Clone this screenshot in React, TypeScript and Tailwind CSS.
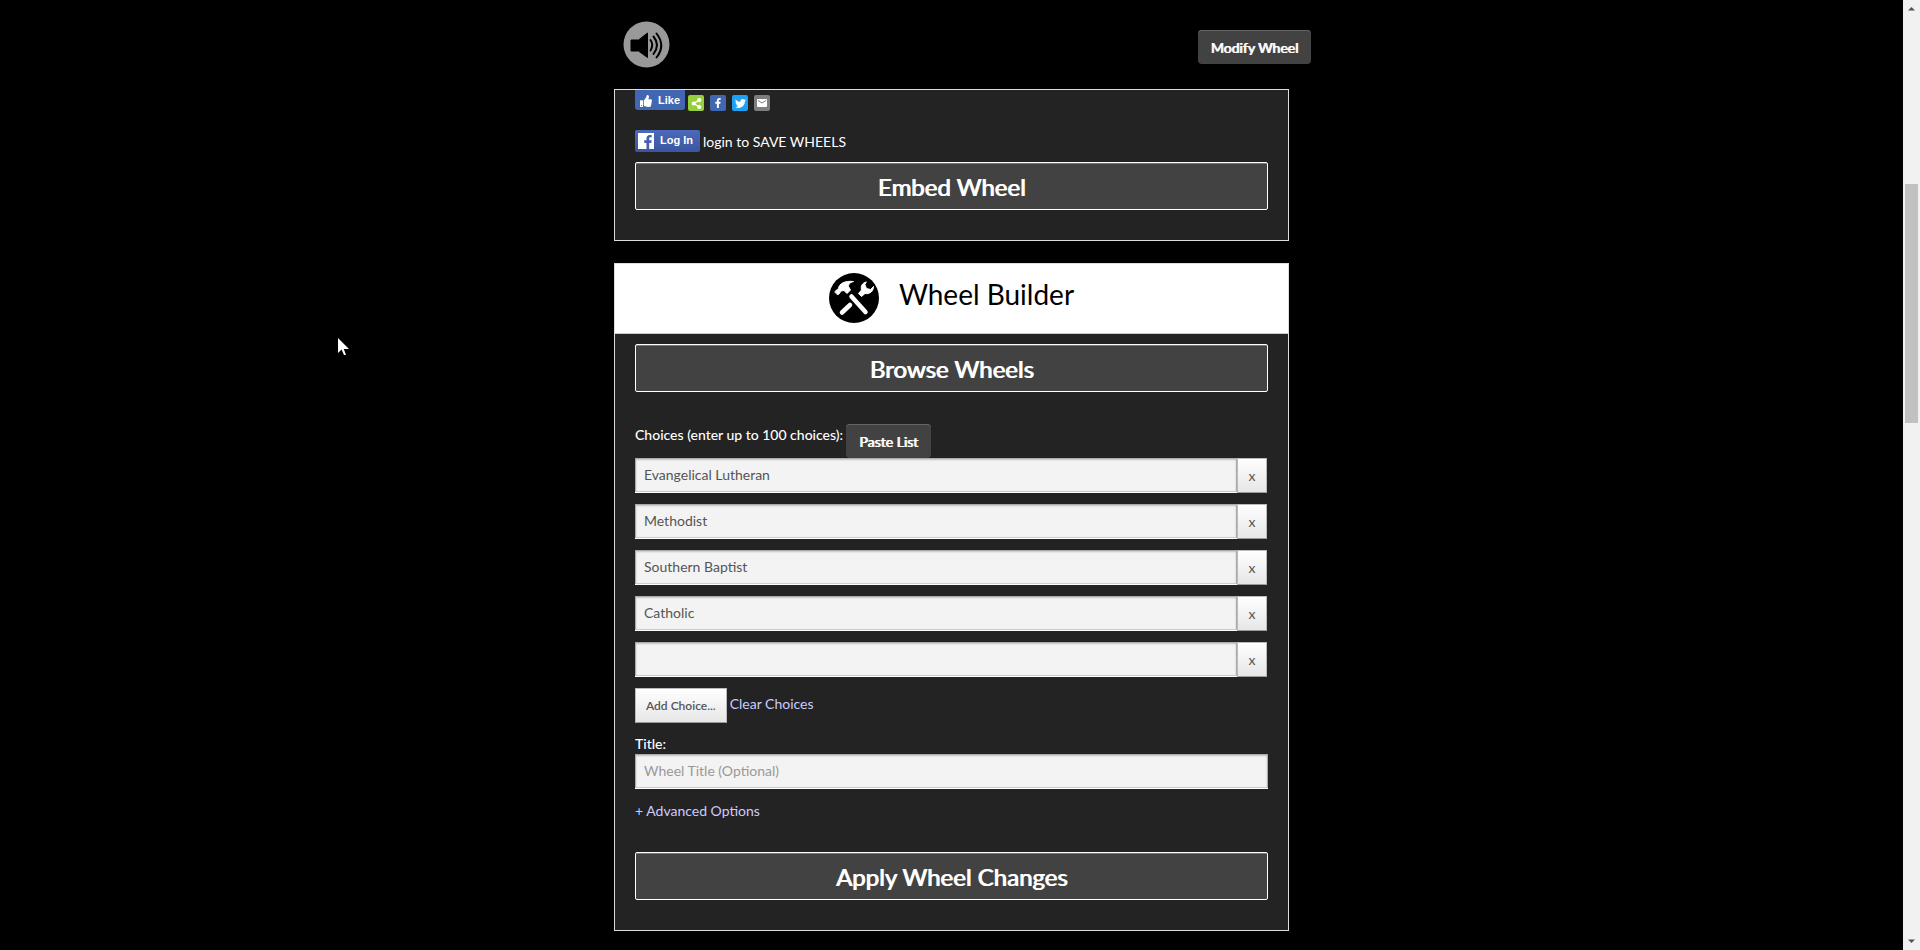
import { useState } from 'react';
import type { ReactNode } from 'react';
import { FaFacebookF, FaShareAlt, FaThumbsUp, FaTwitter } from 'react-icons/fa';
import { MdEmail } from 'react-icons/md';

function SpeakerIcon() {
    return (
        <svg viewBox="0 0 47 47" className="w-[47px] h-[47px]" aria-hidden="true">
            <circle cx="23.5" cy="23.5" r="23" fill="#999" />
            <path d="M8 19h7.500L24.500 12v24.500L15.500 30H8z" fill="#000" stroke="#000" strokeLinejoin="round" />
            <path d="M27.500 19q3.500 5 0 10.500M30.500 15.500q7 8.500 0 17.500M33.500 12.500q9.500 12 0 24" fill="none" stroke="#000" strokeWidth="2" strokeLinecap="round" />
        </svg>
    );
}

function ToolsIcon() {
    return (
        <svg viewBox="0 0 50 50" className="w-[50px] h-[50px]" aria-hidden="true">
            <circle cx="25" cy="25" r="25" fill="#000" />
            <g fill="#fff" stroke="#fff" strokeLinejoin="round" strokeLinecap="round">
                <path d="M22.500 23.500L36.500 39" strokeWidth="4.500" />
                <path d="M21 32L13 39.500" strokeWidth="4.500" />
                <path d="M6 18.500L9.500 15.500C10 10.500 16 7.500 24.500 8.500C20.500 9.500 19.500 11.500 19.500 13.500L21.500 17L18 20.500L15 17.500L12 18L10 21L8.500 21.500Z" strokeWidth="1" />
                <path d="M37 9C33 10 31.500 13.500 32.500 17L29.500 20.500L32.500 23.500L36 20.500C41 21.500 44.500 18 44.500 13.500L41.500 16.500L37.500 15.500L36 12Z" strokeWidth="1" />
            </g>
        </svg>
    );
}

interface ButtonProps {
    children: ReactNode;
    type?: 'button' | 'submit';
}

function BigButton({ children, type = 'button' }: ButtonProps) {
    return (
        <button type={type} className="block w-full h-12 pt-0.5 rounded-xs border border-white bg-[#424242] text-2xl text-white shadow-[inset_0_1px_0_#777] [text-shadow:1px_0_0_#fff]">
            {children}
        </button>
    );
}

function SmallButton({ children }: ButtonProps) {
    return (
        <button type="button" className="h-[34px] px-[13px] pt-0.5 rounded bg-[#424242] text-sm text-white shadow-[inset_0_1px_0_#666] [text-shadow:1px_0_0_#fff]">
            {children}
        </button>
    );
}

const shareLinks = [
    { label: 'Share', color: 'bg-[#95d03a]', icon: <FaShareAlt size={11} /> },
    { label: 'Facebook', color: 'bg-[#4267b2]', icon: <FaFacebookF size={10} /> },
    { label: 'Twitter', color: 'bg-[#1da1f2]', icon: <FaTwitter size={11} /> },
    { label: 'Email', color: 'bg-[#7d7d7d]', icon: <MdEmail size={12} /> },
];

const inputClass = 'h-[34px] min-w-0 px-2 pb-0.5 border border-[#aaa] border-b-[#ccc] bg-[#f3f3f3] text-sm text-[#555] placeholder:text-[#999] shadow-[inset_0_1px_2px_rgba(0,0,0,0.2),0_1px_0_#fff] outline-none';
const lightButton = 'h-[35px] border border-[#bbb] border-b-[#999] bg-linear-to-b from-white to-[#e6e6e6] text-[#555]';

export default function App() {
    const [choices, setChoices] = useState(['Evangelical Lutheran', 'Methodist', 'Southern Baptist', 'Catholic', '']);
    const [title, setTitle] = useState('');

    const updateChoice = (index: number, value: string) => {
        setChoices(choices.map((choice, i) => (i === index ? value : choice)));
    };

    return (
        <div className="flex min-h-screen bg-black font-['Lato',sans-serif] text-sm text-white">
            <div className="flex-1 min-w-0">
                <div className="w-full max-w-[675px] mx-auto">
                    <header className="h-[89px] pl-[9px] -mr-[22px] flex items-center justify-between">
                        <button type="button" aria-label="Toggle sound">
                            <SpeakerIcon />
                        </button>
                        <div className="pt-1">
                            <SmallButton>Modify Wheel</SmallButton>
                        </div>
                    </header>

                    <section className="px-5 pb-[30px] border border-[#ddd] bg-[#232323]">
                        <div className="flex items-start">
                            <button type="button" className="h-5 w-[50px] mr-[3px] pt-0.5 flex items-center justify-center gap-1.5 rounded-b-[3px] bg-[#4267b2] font-['Liberation_Sans',sans-serif] text-[11px] font-bold">
                                <FaThumbsUp size={12} />
                                Like
                            </button>
                            <div className="pt-[5px] flex gap-1.5">
                                {shareLinks.map((link) => (
                                    <a key={link.label} href="#" aria-label={link.label} className={`w-4 h-4 flex items-center justify-center rounded-xs ${link.color}`}>
                                        {link.icon}
                                    </a>
                                ))}
                            </div>
                        </div>
                        <div className="mt-[19px] mb-2.5 flex items-center gap-[3px]">
                            <button type="button" className="h-[22px] w-[65px] pl-[3px] flex items-center gap-1.5 rounded-xs bg-linear-to-b from-[#4c69ba] to-[#3b55a0] font-['Liberation_Sans',sans-serif] text-[11px] font-bold">
                                <span className="w-4 h-4 pl-1 pt-0.5 flex items-end justify-center bg-white text-[#4460ae]">
                                    <FaFacebookF size={14} />
                                </span>
                                Log In
                            </button>
                            <span className="pt-0.5">login to SAVE WHEELS</span>
                        </div>
                        <BigButton>Embed Wheel</BigButton>
                    </section>

                    <section className="mt-[22px] border border-[#ddd] bg-[#232323]">
                        <div className="h-[70px] pb-0.5 flex items-center justify-center gap-5 border-b border-[#ccc] bg-white text-black">
                            <ToolsIcon />
                            <h2 className="pb-2 text-[28px] leading-9">Wheel Builder</h2>
                        </div>
                        <form className="px-5 pt-2.5 pb-[30px]" onSubmit={(e) => e.preventDefault()}>
                            <BigButton>Browse Wheels</BigButton>

                            <div className="mt-8 flex items-start gap-[3px]">
                                <span id="choices-label" className="font-medium leading-[22px]">Choices (enter up to 100 choices):</span>
                                <SmallButton>Paste List</SmallButton>
                            </div>
                            <div role="group" aria-labelledby="choices-label" className="flex flex-col gap-[11px]">
                                {choices.map((choice, i) => (
                                    <div key={i} className="flex items-start pr-px">
                                        <input
                                            type="text"
                                            aria-label={`Choice ${i + 1}`}
                                            value={choice}
                                            onChange={(e) => updateChoice(i, e.target.value)}
                                            className={`flex-1 ${inputClass}`}
                                        />
                                        <button
                                            type="button"
                                            onClick={() => setChoices(choices.filter((_, index) => index !== i))}
                                            className={`w-[30px] text-sm ${lightButton}`}
                                        >
                                            x
                                        </button>
                                    </div>
                                ))}
                            </div>

                            <div className="mt-[11px] flex items-start gap-[3px]">
                                <button type="button" onClick={() => setChoices([...choices, ''])} className={`px-2.5 text-xs font-semibold ${lightButton}`}>
                                    Add Choice...
                                </button>
                                <a href="#" className="leading-8 text-[#ccccff]">Clear Choices</a>
                            </div>

                            <label htmlFor="wheel-title" className="mt-[11px] block font-medium leading-5">Title:</label>
                            <input
                                id="wheel-title"
                                type="text"
                                placeholder="Wheel Title (Optional)"
                                value={title}
                                onChange={(e) => setTitle(e.target.value)}
                                className={`block w-full ${inputClass}`}
                            />
                            <a href="#" className="mt-[13px] mb-[31px] block leading-5 text-[#ccccff]">+ Advanced Options</a>

                            <BigButton type="submit">Apply Wheel Changes</BigButton>
                        </form>
                    </section>
                </div>
            </div>

            {/* scroll track */}
            <div className="w-[17px] flex flex-col items-center justify-between bg-[#f1f1f1]" aria-hidden="true">
                <svg viewBox="0 0 17 17" className="w-[17px] h-[17px]"><path d="M5 10.500h7L8.500 7z" fill="#505050" /></svg>
                <div className="flex-1 w-[13px] pt-[167px]">
                    <div className="h-[239px] bg-[#c1c1c1]" />
                </div>
                <svg viewBox="0 0 17 17" className="w-[17px] h-[17px]"><path d="M5 6.500h7L8.500 10z" fill="#505050" /></svg>
            </div>

            {/* mouse pointer */}
            <svg viewBox="0 0 12 19" className="absolute left-[338px] top-[338px] w-3 h-[19px]" aria-hidden="true">
                <path d="M0 0v15l3.500-3.500L6 17h2L5.800 11H11z" fill="#fff" />
            </svg>
        </div>
    );
}
